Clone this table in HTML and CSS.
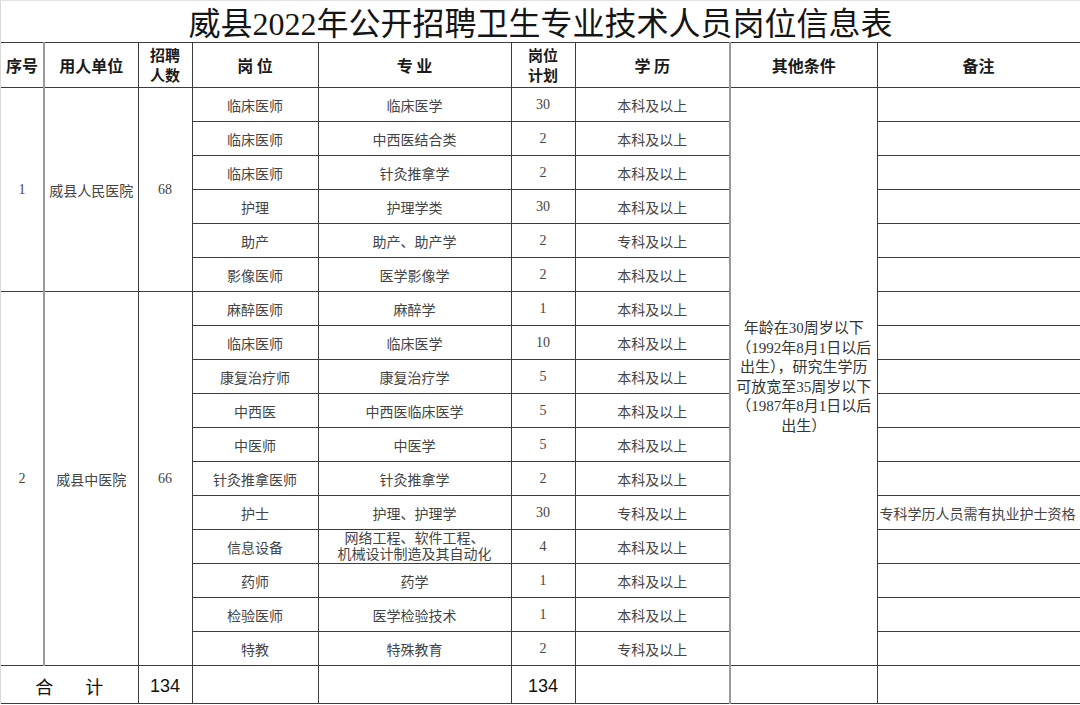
FILE: index.html
```html
<!DOCTYPE html>
<html lang="zh-CN">
<head>
<meta charset="utf-8">
<title>威县2022年公开招聘卫生专业技术人员岗位信息表</title>
<link rel="stylesheet" href="styles.css">
</head>
<body>
<div class="sheet">
  <h1 class="title">威县2022年公开招聘卫生专业技术人员岗位信息表</h1>
  <table class="grid">
    <colgroup>
      <col class="c-no"><col class="c-unit"><col class="c-num"><col class="c-post"><col class="c-major"><col class="c-plan"><col class="c-edu"><col class="c-other"><col class="c-note">
    </colgroup>
    <thead>
      <tr class="head">
        <th class="b-gray-r">序号</th>
        <th>用人单位</th>
        <th class="two">招聘<br>人数</th>
        <th>岗&nbsp;位</th>
        <th>专&nbsp;业</th>
        <th class="two">岗位<br>计划</th>
        <th>学&nbsp;历</th>
        <th class="b-gray-l">其他条件</th>
        <th>备注</th>
      </tr>
    </thead>
    <tbody>
      <tr>
        <td rowspan="6" class="b-gray-r">1</td>
        <td rowspan="6">威县人民医院</td>
        <td rowspan="6">68</td>
        <td>临床医师</td><td>临床医学</td><td>30</td><td>本科及以上</td>
        <td rowspan="17" class="b-gray-l other">年龄在30周岁以下<br>（1992年8月1日以后<br>出生），研究生学历<br>可放宽至35周岁以下<br>（1987年8月1日以后<br>出生）</td>
        <td></td>
      </tr>
      <tr><td>临床医师</td><td>中西医结合类</td><td>2</td><td>本科及以上</td><td></td></tr>
      <tr><td>临床医师</td><td>针灸推拿学</td><td>2</td><td>本科及以上</td><td></td></tr>
      <tr><td>护理</td><td>护理学类</td><td>30</td><td>本科及以上</td><td></td></tr>
      <tr><td>助产</td><td>助产、助产学</td><td>2</td><td>专科及以上</td><td></td></tr>
      <tr><td>影像医师</td><td>医学影像学</td><td>2</td><td>本科及以上</td><td></td></tr>
      <tr>
        <td rowspan="11" class="b-gray-r">2</td>
        <td rowspan="11">威县中医院</td>
        <td rowspan="11">66</td>
        <td>麻醉医师</td><td>麻醉学</td><td>1</td><td>本科及以上</td><td></td>
      </tr>
      <tr><td>临床医师</td><td>临床医学</td><td>10</td><td>本科及以上</td><td></td></tr>
      <tr><td>康复治疗师</td><td>康复治疗学</td><td>5</td><td>本科及以上</td><td></td></tr>
      <tr><td>中西医</td><td>中西医临床医学</td><td>5</td><td>本科及以上</td><td></td></tr>
      <tr><td>中医师</td><td>中医学</td><td>5</td><td>本科及以上</td><td></td></tr>
      <tr><td>针灸推拿医师</td><td>针灸推拿学</td><td>2</td><td>本科及以上</td><td></td></tr>
      <tr><td>护士</td><td>护理、护理学</td><td>30</td><td>专科及以上</td><td class="note">专科学历人员需有执业护士资格</td></tr>
      <tr><td>信息设备</td><td class="tight">网络工程、软件工程、<br>机械设计制造及其自动化</td><td>4</td><td>本科及以上</td><td></td></tr>
      <tr><td>药师</td><td>药学</td><td>1</td><td>本科及以上</td><td></td></tr>
      <tr><td>检验医师</td><td>医学检验技术</td><td>1</td><td>本科及以上</td><td></td></tr>
      <tr><td>特教</td><td>特殊教育</td><td>2</td><td>专科及以上</td><td></td></tr>
    </tbody>
    <tfoot>
      <tr class="total">
        <td colspan="2" class="sum-label">合<span class="gap"></span>计</td>
        <td>134</td>
        <td></td>
        <td></td>
        <td>134</td>
        <td></td>
        <td class="b-gray-l"></td>
        <td></td>
      </tr>
    </tfoot>
  </table>
</div>
</body>
</html>
```
FILE: styles.css
```css
html, body {
  margin: 0;
  padding: 0;
  background: #ffffff;
}

.sheet {
  width: 1080px;
  border-left: 1px solid #d8d8d8;
  box-sizing: border-box;
}

.title {
  margin: 0;
  height: 42px;
  line-height: 46px;
  text-align: center;
  font-family: "Liberation Serif", "Noto Sans CJK SC", serif;
  font-weight: normal;
  font-size: 32px;
  color: #151515;
  border-top: 1px solid #e2e2e2;
  box-sizing: border-box;
}

.grid {
  width: 1079px;
  table-layout: fixed;
  border-collapse: collapse;
  font-family: "Liberation Serif", "Noto Sans CJK SC", serif;
  font-size: 14px;
  color: #444;
}

.c-no { width: 43px; }
.c-unit { width: 94px; }
.c-num { width: 54px; }
.c-post { width: 126px; }
.c-major { width: 193px; }
.c-plan { width: 64px; }
.c-edu { width: 155px; }
.c-other { width: 147px; }
.c-note { width: 203px; }

.grid th,
.grid td {
  border: 1px solid #3c3c3c;
  padding: 0;
  text-align: center;
  vertical-align: middle;
  white-space: nowrap;
  overflow: hidden;
}

.grid th:first-child,
.grid td:first-child {
  border-left: none;
}

.head {
  height: 45px;
}

.head th {
  font-family: "Noto Sans CJK SC", serif;
  font-weight: bold;
  font-size: 16px;
  color: #1a1a1a;
  line-height: 20px;
}

.head th.two {
  font-size: 15px;
  line-height: 20px;
}

tbody tr {
  height: 34px;
}

.b-gray-r {
  border-right: 2px solid #9a9a9a !important;
}

.b-gray-l {
  border-left: 2px solid #9a9a9a !important;
}

.grid td.other {
  font-size: 15px;
  line-height: 19.5px;
  color: #333;
  padding-top: 2px;
}

.grid td.tight {
  line-height: 16px;
  font-size: 14px;
  vertical-align: middle;
  overflow: visible;
}

.grid td.note {
  text-align: left;
  padding-left: 2px;
  font-size: 14px;
}

.total {
  height: 38px;
}

.total td {
  font-family: "Liberation Sans", "Noto Sans CJK SC", sans-serif;
  font-size: 18px;
  color: #111;
  padding-top: 3px;
}

.sum-label {
  font-weight: normal;
}

.gap {
  display: inline-block;
  width: 32px;
}
```
